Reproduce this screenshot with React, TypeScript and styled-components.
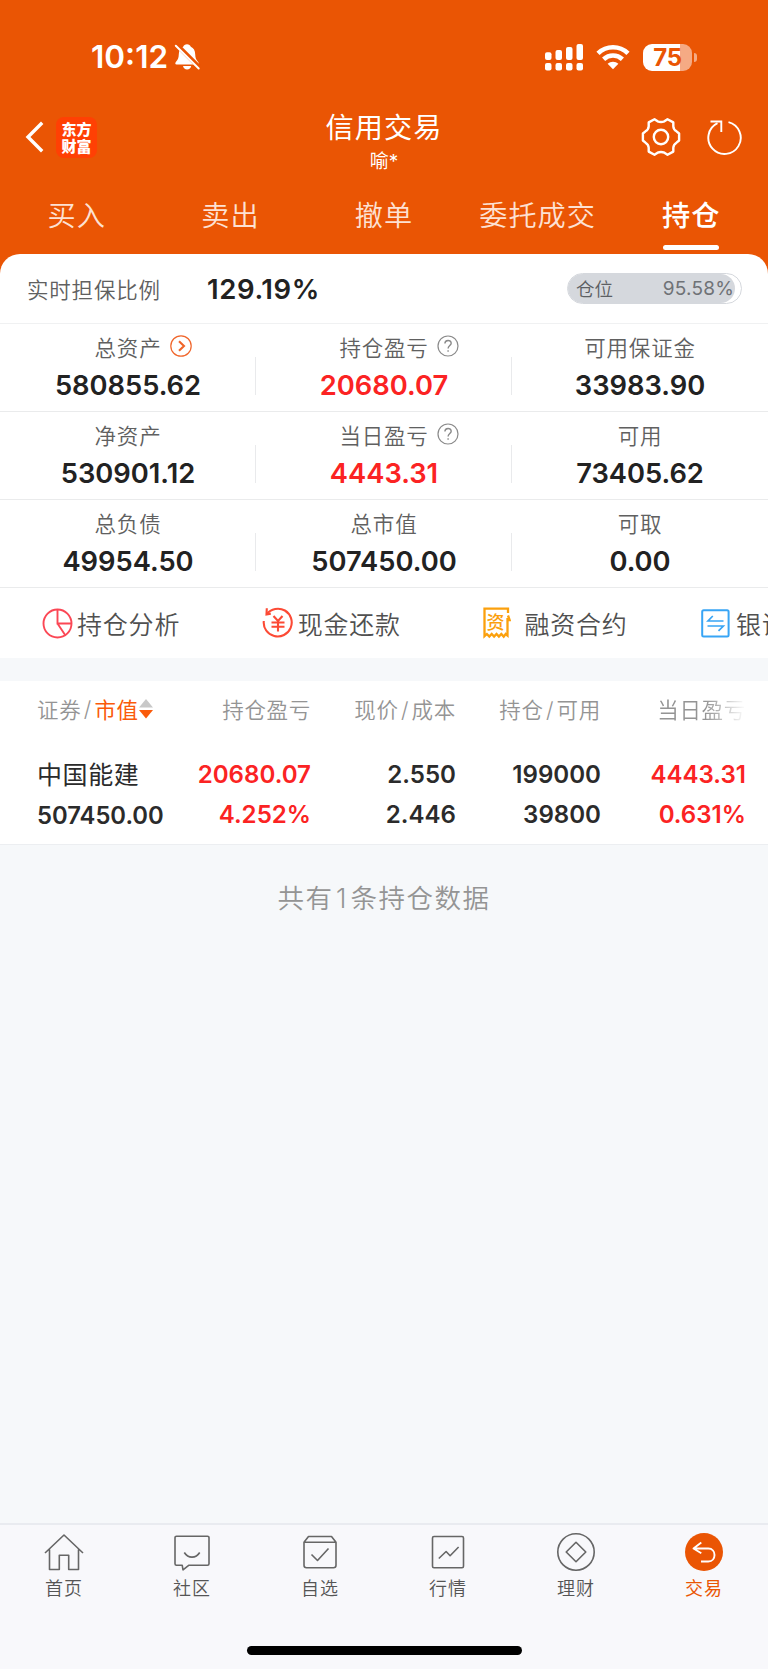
import React from 'react';
import styled, { createGlobalStyle } from 'styled-components';

const ORANGE = '#ea5504';
const RED = '#fb2323';

const GlobalStyle = createGlobalStyle`
  * { box-sizing: border-box; }
  body {
    margin: 0;
    background: #f6f8fa;
    font-family: Inter, "Noto Sans CJK SC", sans-serif;
    -webkit-font-smoothing: antialiased;
  }
`;

const Screen = styled.div`
  width: 768px;
  height: 1669px;
  display: flex;
  flex-direction: column;
  overflow: hidden;
  background: #f6f8fa;
`;

const Hero = styled.header`
  height: 276px;
  flex: none;
  background: ${ORANGE};
  color: #fff;
`;

const StatusBar = styled.div`
  height: 112px;
  padding: 2px 71px 0 91px;
  display: flex;
  align-items: center;
  justify-content: space-between;
`;

const StatusGroup = styled.div<{ $gap: number }>`
  display: flex;
  align-items: center;
  gap: ${(p) => p.$gap}px;
`;

const Clock = styled.span`
  font-size: 31.5px;
  line-height: 38px;
  font-weight: 600;
  letter-spacing: 0;
`;

const Battery = styled.div`
  display: flex;
  align-items: center;
  gap: 2px;
`;

const BatteryBody = styled.div`
  width: 49px;
  height: 27px;
  border-radius: 9px;
  background: linear-gradient(90deg, #fff 75%, #f5aa84 75%);
  color: ${ORANGE};
  font-size: 24px;
  line-height: 27px;
  font-weight: 700;
  text-align: center;
  letter-spacing: -0.2px;
`;

const BatteryNub = styled.div`
  width: 3px;
  height: 9px;
  border-radius: 0 4px 4px 0;
  background: #f5aa84;
`;

const TitleBar = styled.div`
  height: 64px;
  padding: 0 25px 0 25px;
  display: grid;
  grid-template-columns: 1fr auto 1fr;
  align-items: start;
`;

const TitleSide = styled.div<{ $end?: boolean }>`
  display: flex;
  align-items: center;
  height: 50px;
  gap: ${(p) => (p.$end ? 26 : 12)}px;
  justify-content: ${(p) => (p.$end ? 'flex-end' : 'flex-start')};
`;

const BrandLogo = styled.div`
  width: 41px;
  height: 41px;
  padding: 3px 5px 0;
  border-radius: 8px;
  background: #ff4004;
  text-align: center;
  word-break: break-all;
  font-family: "Noto Sans CJK SC", sans-serif;
  font-size: 15px;
  line-height: 17px;
  font-weight: 900;
`;

const TitleText = styled.div`
  display: flex;
  flex-direction: column;
  align-items: center;
  margin-top: -1px;
`;

const Title = styled.h1`
  margin: 0;
  font-size: 28.2px;
  line-height: 34px;
  font-weight: 400;
  letter-spacing: 1px;
`;

const Account = styled.div`
  font-size: 19px;
  line-height: 26px;
  padding-top: 3.5px;
`;

const Tabs = styled.nav`
  height: 78px;
  display: grid;
  grid-template-columns: repeat(5, 1fr);
`;

const Tab = styled.div<{ $active?: boolean }>`
  display: flex;
  flex-direction: column;
  align-items: center;
  padding-top: 20px;
  font-size: 28.2px;
  line-height: 40px;
  letter-spacing: 1px;
  font-weight: ${(p) => (p.$active ? 500 : 350)};
  color: ${(p) => (p.$active ? '#fff' : '#fde1d3')};
  &::after {
    content: '';
    display: ${(p) => (p.$active ? 'block' : 'none')};
    width: 56px;
    height: 5px;
    margin-top: 9px;
    border-radius: 3px;
    background: #fff;
  }
`;

const Summary = styled.section`
  flex: none;
  height: 404px;
  margin-top: -22px;
  background: #fff;
  border-radius: 20px 20px 0 0;
`;

const RatioRow = styled.div`
  height: 70px;
  padding: 0 26px 0 27px;
  display: flex;
  align-items: center;
  border-bottom: 1px solid #f0f1f2;
`;

const RatioLabel = styled.span`
  width: 180px;
  font-size: 21.5px;
  letter-spacing: 0.8px;
  font-weight: 350;
  color: #606060;
`;

const RatioValue = styled.span`
  flex: 1;
  font-size: 27.5px;
  font-weight: 600;
  letter-spacing: 0.6px;
  color: #222;
`;

const PositionPill = styled.div`
  width: 175px;
  height: 31px;
  border-radius: 16px;
  border: 1.5px solid #d5d8dd;
  background: #fff;
`;

const PositionFill = styled.div`
  width: 167px;
  height: 100%;
  border-radius: 16px;
  padding: 0 1px 0 8px;
  background: #d5d8dd;
  display: flex;
  align-items: center;
  justify-content: space-between;
  font-size: 18.5px;
  line-height: 28px;
  font-weight: 350;
  color: #5c5f63;
`;

const PositionPercent = styled.span`
  font-weight: 400;
  font-size: 19px;
  letter-spacing: 0.2px;
  color: #6f7276;
`;

const MetricRow = styled.div`
  height: 88px;
  display: grid;
  grid-template-columns: repeat(3, 1fr);
  border-bottom: 1px solid #eaebec;
`;

const Metric = styled.div`
  position: relative;
  display: flex;
  flex-direction: column;
  align-items: center;
  padding-top: 7px;
  &:not(:last-child)::after {
    content: '';
    position: absolute;
    right: 0;
    top: 33px;
    width: 1px;
    height: 38px;
    background: #e9eaec;
  }
`;

const MetricLabel = styled.div`
  display: flex;
  align-items: center;
  height: 30px;
  font-size: 21.5px;
  letter-spacing: 0.8px;
  font-weight: 350;
  color: #606060;
`;

const LabelText = styled.span`
  position: relative;
`;

const LabelBadge = styled.span`
  position: absolute;
  left: 100%;
  top: 50%;
  display: flex;
  margin: -11px 0 0 8.5px;
`;

const MetricValue = styled.div<{ $red?: boolean }>`
  margin-top: 9px;
  font-size: 27.3px;
  line-height: 32px;
  font-weight: 600;
  color: ${(p) => (p.$red ? RED : '#222')};
`;

const Shortcuts = styled.div`
  height: 70px;
  display: flex;
  overflow: hidden;
`;

const Shortcut = styled.div<{ $gap: number }>`
  flex: none;
  width: 219.7px;
  padding: 0 0 0 42px;
  display: flex;
  align-items: center;
  gap: ${(p) => p.$gap}px;
  font-size: 25px;
  font-weight: 350;
  letter-spacing: 0.8px;
  white-space: nowrap;
  color: #505050;
`;

const Holdings = styled.section`
  flex: none;
  margin-top: 23px;
  height: 164px;
  background: #fff;
  border-bottom: 1px solid #eceef1;
`;

const HoldingsHead = styled.div`
  height: 48px;
  padding: 7px 22px 0 38px;
  display: grid;
  grid-template-columns: 128px 145px 145px 145px 145px;
  align-items: center;
  font-size: 21.5px;
  font-weight: 350;
  letter-spacing: 0.7px;
  color: #949494;
`;

const HeadCell = styled.div<{ $fade?: boolean }>`
  text-align: right;
  white-space: nowrap;
  ${(p) => p.$fade && 'mask-image: linear-gradient(90deg, #000 72%, transparent 100%);'}
`;

const SortCell = styled.div`
  display: flex;
  align-items: center;
  white-space: nowrap;
  margin-left: -1px;
`;

const Slash = styled.span`
  padding: 0 2.4px;
`;

const SortKey = styled.span`
  font-weight: 400;
  color: #fa5a0a;
`;

const HoldingRow = styled.div`
  padding: 26px 22px 0 38px;
  display: grid;
  grid-template-columns: 128px 145px 145px 145px 145px;
`;

const HoldingCell = styled.div<{ $red?: boolean }>`
  display: flex;
  flex-direction: column;
  align-items: flex-end;
  font-size: 24.1px;
  line-height: 40px;
  font-weight: 600;
  white-space: nowrap;
  color: ${(p) => (p.$red ? RED : '#2b2b2b')};
`;

const StockCell = styled(HoldingCell)`
  align-items: flex-start;
  margin-left: -1px;
  font-size: 23.8px;
`;

const StockName = styled.span`
  font-weight: 400;
  font-size: 25px;
  line-height: 41px;
  letter-spacing: 0.6px;
  color: #2b2b2b;
`;

const Empty = styled.div`
  flex: 1;
  padding-top: 34px;
  text-align: center;
  font-size: 26.5px;
  line-height: 38px;
  font-weight: 350;
  letter-spacing: 1.5px;
  color: #949494;
`;

const Count = styled.span`
  padding: 0 2.5px;
`;

const BottomNav = styled.nav`
  flex: none;
  height: 146px;
  display: flex;
  flex-direction: column;
  background: #f8f8fb;
  border-top: 2px solid #e9ebf0;
`;

const NavItems = styled.div`
  display: grid;
  grid-template-columns: repeat(6, 1fr);
  padding-top: 7.5px;
`;

const NavItem = styled.div<{ $active?: boolean }>`
  display: flex;
  flex-direction: column;
  align-items: center;
  font-size: 18px;
  line-height: 26px;
  letter-spacing: 1px;
  font-weight: ${(p) => (p.$active ? 400 : 350)};
  color: ${(p) => (p.$active ? ORANGE : '#555')};
  svg { margin-bottom: 5.5px; }
`;

const HomeIndicator = styled.div`
  width: 275px;
  height: 9px;
  margin: auto auto 14px;
  border-radius: 5px;
  background: #000;
`;

const BellOff = () => (
  <svg width="27" height="28" viewBox="0 0 27 28">
    <path d="M13 1.2c-1.9 0-3.3 1-3.8 2.5C6.300 5 4.900 7.500 4.800 11.200c-.1 4-1 5.600-2.800 7.500-1 1.100-1.100 2.800.6 2.800h20.800c1.700 0 1.600-1.700.6-2.800-1.800-1.900-2.700-3.500-2.800-7.500-.1-3.700-1.500-6.200-4.400-7.500-.5-1.500-1.900-2.500-3.800-2.500z" fill="#fff" />
    <path d="M9 23h8.200c-.5 2.200-1.900 3.400-4.100 3.400S9.500 25.200 9 23z" fill="#fff" />
    <path d="M2.300 1.300 26 25" stroke={ORANGE} strokeWidth="4.600" />
    <path d="M1.800 2.800 24.700 25.500" stroke="#fff" strokeWidth="2" strokeLinecap="round" />
  </svg>
);

const Signal = () => (
  <svg width="38" height="27" viewBox="0 0 38 27" fill="#fff">
    {[0, 10.5, 21, 31.5].map((x, i) => {
      const top = [8.3, 6, 3, 0][i];
      return (
        <g key={x}>
          <rect x={x} y={top} width="6.5" height={16 - top} rx="2" />
          <rect x={x} y="19" width="6.5" height="7.5" rx="2" />
        </g>
      );
    })}
  </svg>
);

const Wifi = () => (
  <svg width="34" height="26" viewBox="0 0 34 26" fill="none" stroke="#fff" strokeWidth="4.600">
    <path d="M2 9.300C10.500 1.200 23.500 1.200 32 9.300" />
    <path d="M7.600 15.300c5.400-5 13.400-5 18.800 0" />
    <path d="M17 25.200l-5.400-5.400c3-2.700 7.800-2.700 10.800 0z" fill="#fff" stroke="none" />
  </svg>
);

const BackIcon = () => (
  <svg width="19" height="32" viewBox="0 0 19 32" fill="none" stroke="#fff" strokeWidth="3.400">
    <path d="M17.200 1.800 3 16l14.200 14.200" />
  </svg>
);

const GearIcon = () => (
  <svg width="40" height="40" viewBox="0 0 40 40" fill="none" stroke="#fff" strokeWidth="2.400" strokeLinejoin="round">
    <path d="M13.500 2.200 16.600 4.300q3.400 1.400 6.800 0L26.500 2.200 32.300 5.400V9.200q.2 3.400 3.200 5.100l2.600 2.200v7l-2.600 2.200q-3 1.700-3.200 5.100v3.800L26.500 37.800 23.400 35.700q-3.400-1.400-6.800 0L13.500 37.800 7.700 34.600V30.800q-.2-3.400-3.200-5.100l-2.600-2.200v-7l2.600-2.200q3-1.700 3.200-5.100V5.400z" />
    <circle cx="20" cy="20" r="7.200" />
  </svg>
);

const RefreshIcon = () => (
  <svg width="36" height="38" viewBox="0 0 36 38" fill="none" stroke="#fff" strokeWidth="1.900">
    <path d="M21.500 4.100A16.200 16.200 0 1 1 10.500 5.200" />
    <path d="M3.500 3.500h10.800v10.500" />
  </svg>
);

const ArrowCircle = () => (
  <svg width="22" height="22" viewBox="0 0 22 22" fill="none" stroke="#f0652a">
    <circle cx="11" cy="11" r="10.200" strokeWidth="1.200" />
    <path d="M9 6.200 14 11l-5 4.800" strokeWidth="2.100" />
  </svg>
);

const HelpCircle = () => (
  <svg width="22" height="22" viewBox="0 0 22 22" fill="none" stroke="#8a8a8a" strokeWidth="1.200">
    <circle cx="11" cy="11" r="10" />
    <path d="M7.900 8.600c0-4.200 6.400-4.100 6.300-.3-.1 2.300-3.100 2.400-3.100 5.300M11.100 15.200v1.600" strokeWidth="1.400" />
  </svg>
);

const PieIcon = () => (
  <svg width="31" height="31" viewBox="0 0 31 31" fill="none" stroke="#fb4755" strokeWidth="1.900">
    <circle cx="15.500" cy="15.500" r="14" />
    <path d="M15.500 1.500v14h14M15.500 15.500l7.800 11.800" />
  </svg>
);

const CashIcon = () => (
  <svg width="32" height="32" viewBox="0 0 32 32" fill="none" stroke="#fc4a35" strokeWidth="2.100">
    <path d="M4.600 7.200C9 1.500 17 .2 22.900 3.500A14 14 0 1 1 1.800 14" />
    <path d="M4.800 1.200l-.3 6.200 4.300-.8" />
    <path d="M11.500 9l4.500 5 4.500-5M9.500 15.500h13M9.500 19.700h13M16 14v10.500" />
  </svg>
);

const ContractIcon = () => (
  <svg width="30" height="32" viewBox="-1 0 30 32" fill="none" stroke="#fba00d" strokeWidth="2.300">
    <path d="M26 6V1.700H2.500v27.500l2.400-2.200 2.400 2.600 2.400-2.600 2.400 2.600 2.400-2.600 2.400 2.600 2.400-2.600 2.400 2.600 2-2.600 1.800 1.500V11" />
    <path d="M26 8.500l1.600 4.500H26" />
    <text x="14" y="21.800" textAnchor="middle" fontFamily="Noto Sans CJK SC" fontSize="18" fontWeight="500" fill="#fba00d" stroke="none">资</text>
  </svg>
);

const TransferIcon = () => (
  <svg width="29" height="29" viewBox="0 0 29 29" fill="none" stroke="#38a5f5" strokeWidth="2">
    <rect x="1.200" y="1.200" width="26.400" height="26.400" rx="1.500" />
    <path d="M22.500 12H7l4.800-5M6.500 17h15.800l-4.800 4.800" strokeWidth="1.700" />
  </svg>
);

const SortArrows = () => (
  <svg width="14" height="20" viewBox="0 0 14 20">
    <path d="M7 0l7 8.500H0z" fill="#c8c8c8" />
    <path d="M7 19.500l7-8.500H0z" fill="#fa5a0a" />
  </svg>
);

const navIcons: Record<string, React.ReactNode> = {
  home: <path d="M1 20 20 2l19 18M5.500 16.500V36.500h9.800V22.300h9.400V36.500h9.800V16.500" />,
  chat: (
    <>
      <path d="M4.500 3.200h31a1.500 1.500 0 0 1 1.500 1.500v26a1.500 1.500 0 0 1-1.500 1.500H17l-6 4.600-.8-4.600H4.500A1.500 1.500 0 0 1 3 30.700v-26a1.500 1.500 0 0 1 1.500-1.500z" />
      <path d="M12.300 19.500c3.800 6.200 11.600 6.200 15.400 0" />
    </>
  ),
  box: (
    <>
      <path d="M4 9.300v23a2.500 2.500 0 0 0 2.500 2.500h27a2.500 2.500 0 0 0 2.500-2.500v-23L31.500 3.500h-23zM4 9.300h32" />
      <path d="M11.500 21.500l6 6 11-12" />
    </>
  ),
  chart: (
    <>
      <rect x="4.500" y="3.500" width="31" height="31.300" rx="1.500" />
      <path d="M10.800 25.500l7.300-7 4 4.200 8.500-8.700" />
    </>
  ),
  coin: (
    <>
      <circle cx="20" cy="19" r="18.200" />
      <path d="M20 9.300l9.800 9.700-9.800 9.700L10.200 19z" />
    </>
  ),
  trade: (
    <>
      <circle cx="20" cy="19" r="19" fill={ORANGE} stroke="none" />
      <path d="M17.300 9.600 9.500 15.500l7.800 4.800M9.500 15.500h14.800c8.300 0 8.300 13 0 13H17" stroke="#fff" strokeWidth="1.900" />
    </>
  ),
};

const metrics = [
  [
    { label: '总资产', value: '580855.62', icon: <ArrowCircle /> },
    { label: '持仓盈亏', value: '20680.07', icon: <HelpCircle />, red: true },
    { label: '可用保证金', value: '33983.90' },
  ],
  [
    { label: '净资产', value: '530901.12' },
    { label: '当日盈亏', value: '4443.31', icon: <HelpCircle />, red: true },
    { label: '可用', value: '73405.62' },
  ],
  [
    { label: '总负债', value: '49954.50' },
    { label: '总市值', value: '507450.00' },
    { label: '可取', value: '0.00' },
  ],
];

const tabs = ['买入', '卖出', '撤单', '委托成交', '持仓'];

const navItems = [
  ['home', '首页'],
  ['chat', '社区'],
  ['box', '自选'],
  ['chart', '行情'],
  ['coin', '理财'],
  ['trade', '交易'],
];

export default function App() {
  return (
    <>
      <GlobalStyle />
      <Screen>
        <Hero>
          <StatusBar>
            <StatusGroup $gap={6}>
              <Clock>10:12</Clock>
              <BellOff />
            </StatusGroup>
            <StatusGroup $gap={13}>
              <Signal />
              <Wifi />
              <Battery>
                <BatteryBody>75</BatteryBody>
                <BatteryNub />
              </Battery>
            </StatusGroup>
          </StatusBar>
          <TitleBar>
            <TitleSide>
              <BackIcon />
              <BrandLogo>东方财富</BrandLogo>
            </TitleSide>
            <TitleText>
              <Title>信用交易</Title>
              <Account>喻*</Account>
            </TitleText>
            <TitleSide $end>
              <GearIcon />
              <RefreshIcon />
            </TitleSide>
          </TitleBar>
          <Tabs>
            {tabs.map((t) => (
              <Tab key={t} $active={t === '持仓'}>
                {t}
              </Tab>
            ))}
          </Tabs>
        </Hero>

        <Summary>
          <RatioRow>
            <RatioLabel>实时担保比例</RatioLabel>
            <RatioValue>129.19%</RatioValue>
            <PositionPill>
              <PositionFill>
                <span>仓位</span>
                <PositionPercent>95.58%</PositionPercent>
              </PositionFill>
            </PositionPill>
          </RatioRow>
          {metrics.map((row, i) => (
            <MetricRow key={i}>
              {row.map((m) => (
                <Metric key={m.label}>
                  <MetricLabel>
                    <LabelText>
                      {m.label}
                      {m.icon && <LabelBadge>{m.icon}</LabelBadge>}
                    </LabelText>
                  </MetricLabel>
                  <MetricValue $red={m.red}>{m.value}</MetricValue>
                </Metric>
              ))}
            </MetricRow>
          ))}
          <Shortcuts>
            <Shortcut $gap={4}>
              <PieIcon />
              持仓分析
            </Shortcut>
            <Shortcut $gap={4}>
              <CashIcon />
              现金还款
            </Shortcut>
            <Shortcut $gap={13}>
              <ContractIcon />
              融资合约
            </Shortcut>
            <Shortcut $gap={6}>
              <TransferIcon />
              银证转账
            </Shortcut>
          </Shortcuts>
        </Summary>

        <Holdings>
          <HoldingsHead>
            <SortCell>
              证券<Slash>/</Slash>
              <SortKey>市值</SortKey>
              <SortArrows />
            </SortCell>
            <HeadCell>持仓盈亏</HeadCell>
            <HeadCell>
              现价<Slash>/</Slash>成本
            </HeadCell>
            <HeadCell>
              持仓<Slash>/</Slash>可用
            </HeadCell>
            <HeadCell $fade>当日盈亏</HeadCell>
          </HoldingsHead>
          <HoldingRow>
            <StockCell>
              <StockName>中国能建</StockName>
              <span>507450.00</span>
            </StockCell>
            <HoldingCell $red>
              <span>20680.07</span>
              <span>4.252%</span>
            </HoldingCell>
            <HoldingCell>
              <span>2.550</span>
              <span>2.446</span>
            </HoldingCell>
            <HoldingCell>
              <span>199000</span>
              <span>39800</span>
            </HoldingCell>
            <HoldingCell $red>
              <span>4443.31</span>
              <span>0.631%</span>
            </HoldingCell>
          </HoldingRow>
        </Holdings>

        <Empty>
          共有<Count>1</Count>条持仓数据
        </Empty>

        <BottomNav>
          <NavItems>
            {navItems.map(([icon, label]) => (
              <NavItem key={icon} $active={icon === 'trade'}>
                <svg width="40" height="38" viewBox="0 0 40 38" fill="none" stroke="#666" strokeWidth="1.6" strokeLinejoin="round">
                  {navIcons[icon]}
                </svg>
                {label}
              </NavItem>
            ))}
          </NavItems>
          <HomeIndicator />
        </BottomNav>
      </Screen>
    </>
  );
}
